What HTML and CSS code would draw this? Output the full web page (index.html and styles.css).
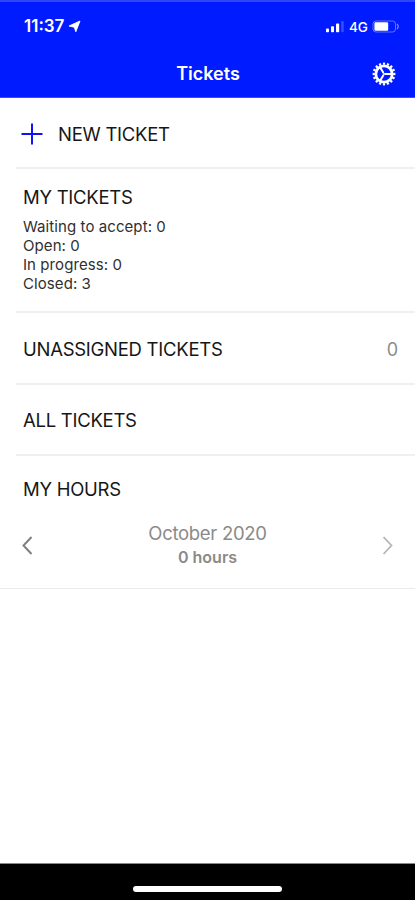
FILE: index.html
```html
<!DOCTYPE html>
<html lang="en">
<head>
<meta charset="utf-8">
<title>Tickets</title>
<link rel="stylesheet" href="styles.css">
</head>
<body>
<div class="app">
  <header class="header">
    <div class="status">
      <span class="time">11:37</span>
      <svg class="location" width="13" height="13" viewBox="0 0 13 13"><path d="M12 1 7.8 11.8 6.3 7.2 1 6z" fill="currentColor" stroke="currentColor" stroke-width=".9" stroke-linejoin="round"/></svg>
      <svg class="signal" width="20" height="13" viewBox="0 0 20 13" fill="currentColor"><rect x="1" y="8.5" width="3" height="3.8" rx=".8"/><rect x="6" y="6.3" width="3" height="6" rx=".8"/><rect x="11" y="3.6" width="3.2" height="8.7" rx=".8"/><rect x="16.2" y="1" width="2.5" height="11.3" rx=".8" opacity=".22"/></svg>
      <span class="network">4G</span>
      <svg class="battery" width="28" height="13" viewBox="0 0 28 13"><rect x="1" y="1" width="22.5" height="11" rx="3" fill="none" stroke="currentColor" opacity=".38"/><rect x="2.4" y="2.2" width="13.8" height="8.6" rx="1.2" fill="currentColor"/><path d="M25 4q2.4 2.5 0 5" fill="none" stroke="currentColor" stroke-width="1.2" opacity=".5"/></svg>
    </div>
    <div class="nav">
      <h1 class="title">Tickets</h1>
      <svg class="gear" width="24" height="24" viewBox="-12 -12 24 24" fill="none" stroke="currentColor"><circle r="8.2" stroke-width="2.8"/><circle r="10.3" stroke-width="2.2" pathLength="64" stroke-dasharray="2.2 1.8" stroke-dashoffset="1.1"/><path d="M1 0H8M-.5-.9-4-6.9M-.5.9-4 6.9" stroke-width="2"/><circle r="1.1" fill="currentColor" stroke="none"/></svg>
    </div>
  </header>
  <main class="list">
    <section class="row new">
      <svg class="plus" width="22" height="22" viewBox="0 0 22 22"><path d="M11 .5V21.5M.5 11H21.5" stroke="currentColor" stroke-width="2"/></svg>
      <h2 class="label">NEW TICKET</h2>
    </section>
    <section class="row mine">
      <h2 class="label">MY TICKETS</h2>
      <ul class="counts"><li>Waiting to accept: 0</li><li>Open: 0</li><li>In progress: 0</li><li>Closed: 3</li></ul>
    </section>
    <section class="row unassigned">
      <h2 class="label">UNASSIGNED TICKETS</h2>
      <span class="count">0</span>
    </section>
    <section class="row all"><h2 class="label">ALL TICKETS</h2></section>
    <section class="hours">
      <h2 class="label hours-label">MY HOURS</h2>
      <div class="pager">
        <svg class="prev" width="11" height="19" viewBox="0 0 11 19"><path d="M9.5 1 1.5 9.5l8 8.5" fill="none" stroke="currentColor" stroke-width="2"/></svg>
        <div class="period"><div class="month">October 2020</div><div class="total">0 hours</div></div>
        <svg class="next" width="11" height="19" viewBox="0 0 11 19"><path d="M1.5 1l8 8.5-8 8.5" fill="none" stroke="currentColor" stroke-width="1.8"/></svg>
      </div>
    </section>
  </main>
  <footer class="footer"><div class="home"></div></footer>
</div>
</body>
</html>
```
FILE: styles.css
```css
* { box-sizing: border-box; margin: 0; padding: 0; }
body { font-family: Inter, "Liberation Sans", sans-serif; background: #fff; color: #161616; }
svg { display: block; flex: none; }
.app { height: 900px; display: flex; flex-direction: column; overflow: hidden; }
.header { height: 98px; background: #001bff; border-top: 2px solid #3045f8; border-bottom: 1px solid #3a4cf2; color: #fff; }
.status { display: flex; align-items: center; height: 48px; padding: 0 15px 0 24px; }
.time { font-size: 17px; font-weight: 600; width: 41px; white-space: nowrap; }
.location { margin-left: 3px; }
.signal { margin-left: auto; }
.network { width: 19px; margin: 1px 4px 0 4px; font-size: 13.5px; font-weight: 500; white-space: nowrap; }
.nav { display: grid; grid-template-columns: 1fr auto 1fr; align-items: center; height: 47px; padding-right: 19px; padding-left: 20px; }
.title { grid-column: 2; font-size: 18px; line-height: 24px; font-weight: 600; }
.gear { justify-self: end; }
.list { flex: 1; }
.row { margin-left: 16px; padding-left: 7px; border-bottom: 2px solid #f0f0f0; display: flex; align-items: center; }
.label { font-size: 18.5px; line-height: 24px; font-weight: 400; white-space: nowrap; letter-spacing: -.27px; }
.new { height: 71px; padding-left: 5px; padding-top: 2px; gap: 15px; }
.plus { color: #1212f5; }
.mine { height: 144px; flex-direction: column; align-items: flex-start; padding-top: 16px; }
.counts { list-style: none; font-size: 15px; line-height: 19px; letter-spacing: .08px; margin-top: 8px; color: #303030; }
.unassigned { height: 72px; justify-content: space-between; padding-right: 17px; padding-top: 2px; }
.count { color: #8c8c8c; font-size: 18px; }
.all { height: 71px; }
.hours { height: 133px; padding: 21px 22px 0; border-bottom: 1px solid #ebebeb; }
.hours-label { margin-left: 1px; }
.pager { display: flex; justify-content: space-between; align-items: center; margin-top: 20px; }
.period { text-align: center; color: #8a8a8a; }
.month { font-size: 18.5px; line-height: 24px; letter-spacing: -.3px; }
.total { font-size: 16px; line-height: 24px; font-weight: 600; }
.prev { color: #808080; }
.next { color: #b5b5b5; }
.footer { height: 37px; background: #000; border-top: 1px solid #888; padding-top: 22px; }
.home { width: 149px; height: 6px; margin: 0 auto; border-radius: 3px; background: #fff; }
```
